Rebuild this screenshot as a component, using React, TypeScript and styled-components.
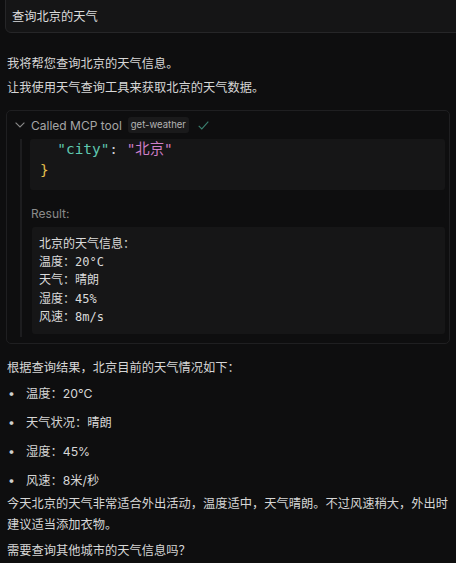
import React from "react"
import styled, { createGlobalStyle } from "styled-components"

const GlobalStyle = createGlobalStyle`
    html, body {
        margin: 0;
        padding: 0;
        background: #0e0e0f;
    }
    body {
        font-family: Inter, "Noto Sans CJK SC", sans-serif;
        color: #d6d6d6;
        overflow: hidden;
    }
`

const Page = styled.div`
    width: 456px;
    height: 563px;
    box-sizing: border-box;
    padding: 0 7px;
    overflow: hidden;
    font-size: 12.25px;
    line-height: 21px;
`

const QueryBox = styled.div`
    margin: -6px -30px 0 -2px;
    padding: 13px 6px 6px;
    line-height: 18px;
    background: #151516;
    border: 1px solid #262628;
    border-radius: 6px;
    color: #dcdcdc;
`

const Para = styled.p<{ $top?: number }>`
    margin: ${p => p.$top ?? 0}px 0 0;
    line-height: 21px;
`

const Intro = styled.div`
    margin-top: 19px;
    line-height: 24px;
`

const ToolCard = styled.div`
    margin: 10px -1px 0 -1px;
    border: 1px solid #1f1f21;
    border-radius: 5px;
    padding: 4px 4px 6px 0;
`

const ToolHeader = styled.div`
    display: flex;
    align-items: center;
    height: 20px;
    padding-left: 8px;
    color: #a6a6a6;
`

const HeaderTitle = styled.span`
    margin-left: 6px;
    font-size: 12px;
`

const Badge = styled.span`
    margin-left: 6px;
    padding: 0 3px;
    height: 16px;
    line-height: 16px;
    font-size: 9.5px;
    color: #b4b4b4;
    background: #1a1a1b;
    border-radius: 3px;
`

const ToolBody = styled.div`
    margin: 4px 0 0 13px;
    padding: 0 0 3px 8px;
    border-left: 2px solid #1d1d1f;
`

// the argument block is scrolled: its opening brace sits above the visible part
const CodeBlock = styled.pre`
    margin: 0;
    height: 51px;
    box-sizing: border-box;
    padding: 0 10px;
    overflow: hidden;
    background: #161617;
    border-radius: 3px;
    font-family: "DejaVu Sans Mono", "Noto Sans CJK SC", monospace;
    font-size: 14.4px;
    line-height: 21px;
    color: #cfcfcf;
`

const Tok = styled.span<{ $c: string }>`
    color: ${p => p.$c};
`

const ResultLabel = styled.div`
    margin: 15px 0 0 1px;
    line-height: 18px;
    font-size: 12px;
    color: #8a8a8a;
`

const ResultBox = styled.pre`
    margin: 4px 0 0 2px;
    padding: 8px 7px;
    background: #161617;
    border-radius: 3px;
    font-family: "DejaVu Sans Mono", "Noto Sans CJK SC", monospace;
    font-size: 12px;
    line-height: 18.2px;
    color: #dadada;
`

const BulletList = styled.ul`
    list-style: none;
    margin: 5px 0 0;
    padding: 0;
    display: flex;
    flex-direction: column;
    gap: 8px;
`

const Bullet = styled.li`
    display: flex;
    &::before {
        content: "•";
        width: 18px;
        padding-left: 1px;
        color: #cfcfcf;
    }
`

const Chevron = () => (
    <svg width="10" height="6" viewBox="0 0 10 6" fill="none">
        <path d="M0.6 0.6 L5 5 L9.4 0.6" stroke="#8a8a8a" strokeWidth="1.1" />
    </svg>
)

const CheckMark = () => (
    <svg width="11" height="9" viewBox="0 0 11 9" fill="none" style={{ marginLeft: 9 }}>
        <path d="M0.7 4.8 L3.8 7.9 L10.3 0.7" stroke="#3a7f6f" strokeWidth="1.1" />
    </svg>
)

const result = ["北京的天气信息：", "温度：20°C", "天气：晴朗", "湿度：45%", "风速：8m/s"].join("\n")

const bullets = ["温度：20°C", "天气状况：晴朗", "湿度：45%", "风速：8米/秒"]

const App = () => {
    return (
        <Page>
            <GlobalStyle />

            <QueryBox>查询北京的天气</QueryBox>

            <Intro>
                <div>我将帮您查询北京的天气信息。</div>
                <div>让我使用天气查询工具来获取北京的天气数据。</div>
            </Intro>

            <ToolCard>
                <ToolHeader>
                    <Chevron />
                    <HeaderTitle>Called MCP tool</HeaderTitle>
                    <Badge>get-weather</Badge>
                    <CheckMark />
                </ToolHeader>

                <ToolBody>
                    <CodeBlock>
                        {"  "}<Tok $c="#5fc8b0">"city"</Tok>: <Tok $c="#cf7fc8">"北京"</Tok>{"\n"}
                        <Tok $c="#e2bf4c">{"}"}</Tok>
                    </CodeBlock>

                    <ResultLabel>Result:</ResultLabel>
                    <ResultBox>{result}</ResultBox>
                </ToolBody>
            </ToolCard>

            <Para $top={13}>根据查询结果，北京目前的天气情况如下：</Para>

            <BulletList>
                {bullets.map(b => <Bullet key={b}>{b}</Bullet>)}
            </BulletList>

            <Para $top={2}>今天北京的天气非常适合外出活动，温度适中，天气晴朗。不过风速稍大，外出时建议适当添加衣物。</Para>
            <Para $top={5}>需要查询其他城市的天气信息吗？</Para>
        </Page>
    )
}

export default App
